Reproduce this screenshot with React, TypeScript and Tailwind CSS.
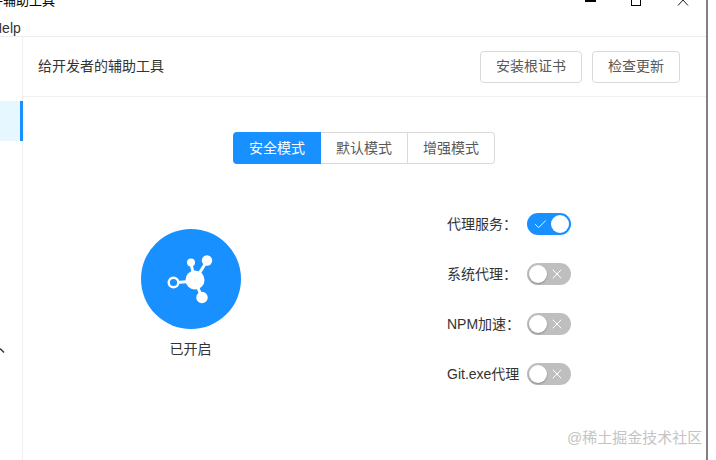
import { Check, X } from "lucide-react";

const font = "font-['Liberation_Sans','Noto_Sans_CJK_SC',sans-serif]";

function Toggle({ on }: { on?: boolean }) {
  if (on) {
    return (
      <div className="w-[44px] h-[22px] rounded-full bg-[#1890ff] flex items-center justify-between pl-[6px] pr-[2px]">
        <Check size={15} strokeWidth={1.5} className="text-white" />
        <div className="w-[18px] h-[18px] rounded-full bg-white" />
      </div>
    );
  }
  return (
    <div className="w-[44px] h-[22px] rounded-full bg-[#bfbfbf] flex items-center justify-between pl-[2px] pr-[6px]">
      <div className="w-[18px] h-[18px] rounded-full bg-white shadow-[0_1px_2px_rgba(0,0,0,0.3)]" />
      <X size={16} strokeWidth={1.5} className="text-white" />
    </div>
  );
}

const rows = [
  { label: "代理服务：", on: true },
  { label: "系统代理：" },
  { label: "NPM加速：" },
  { label: "Git.exe代理" },
];

export default function App() {
  return (
    <div className={`w-[716px] h-[460px] overflow-hidden bg-white ${font}`}>
      <div className="w-[708px] h-[460px] border-r-2 border-[#808080] flex flex-col">
        {/* Title bar, cut off by the top of the picture */}
        <div className="h-[37px] shrink-0 overflow-hidden border-b border-[#ececec]">
          <div className="flex items-start justify-between h-[18px] -mt-[8px]">
            <span className="text-[13px] leading-[18px] text-black -ml-[10px]">手辅助工具</span>
            <div className="flex items-start">
              <div className="w-[11px] h-[10px] border-b-[2px] border-black mr-[35px]" />
              <div className="w-[10px] h-[14px] border border-black mr-[36px]" />
              <svg width="12" height="14" viewBox="0 0 12 14" className="mr-[17px]">
                <path d="M1 13.5 L6 8 L11 13.5" fill="none" stroke="#222" strokeWidth="1" />
              </svg>
            </div>
          </div>
          <div className="text-[14px] leading-[18px] text-[#333] -ml-[8px] mt-[9px]">Help</div>
        </div>

        <div className="flex flex-1 min-h-0">
          {/* Sidebar */}
          <div className="w-[23px] shrink-0 border-r border-[#f0f0f0] pt-[64px] relative">
            <div className="h-[40px] bg-[#e6f7ff] border-r-[3px] border-[#1890ff] -mr-px" />
            <svg width="6" height="6" viewBox="0 0 6 6" className="absolute left-0 top-[311px]">
              <path d="M0 0.5 L4 4.5" stroke="#333" strokeWidth="1.4" fill="none" />
            </svg>
          </div>

          {/* Content */}
          <div className="flex-1 flex flex-col min-w-0">
            <div className="h-[60px] shrink-0 border-b border-[#f0f0f0] flex items-center justify-between pl-[15px] pr-[26px]">
              <span className="text-[14px] text-[#333]">给开发者的辅助工具</span>
              <div className="flex gap-[10px]">
                <div className="w-[102px] h-[32px] rounded border border-[#d9d9d9] flex items-center justify-center text-[14px] text-[#595959]">
                  安装根证书
                </div>
                <div className="w-[88px] h-[32px] rounded border border-[#d9d9d9] flex items-center justify-center text-[14px] text-[#595959]">
                  检查更新
                </div>
              </div>
            </div>

            <div className="flex justify-center pt-[35px] pr-[1px]">
              <div className="flex h-[32px] text-[14px]">
                <div className="w-[88px] rounded-l bg-[#1890ff] text-white flex items-center justify-center">安全模式</div>
                <div className="w-[87px] border-y border-r border-[#d9d9d9] text-[#595959] flex items-center justify-center">默认模式</div>
                <div className="w-[87px] border-y border-r border-[#d9d9d9] rounded-r text-[#595959] flex items-center justify-center">增强模式</div>
              </div>
            </div>

            <div className="flex pt-[49px]">
              <div className="w-[424px] shrink-0 flex flex-col items-center pt-[16px] pr-[89px]">
                <div className="w-[100px] h-[100px] rounded-full bg-[#1890ff] flex items-center justify-center">
                  <svg width="100" height="100" viewBox="0 0 100 100">
                    <g stroke="#fff" strokeWidth="3" fill="none">
                      <path d="M36 53.5 L54 52" />
                      <path d="M54 51 L50 35" />
                      <path d="M54 51 L66 32" />
                      <path d="M54 51 L61 69" />
                    </g>
                    <circle cx="54" cy="51" r="9.5" fill="#fff" />
                    <circle cx="50" cy="33.5" r="4" fill="#fff" />
                    <circle cx="66" cy="31.5" r="5.2" fill="#fff" />
                    <circle cx="61" cy="68.5" r="5.7" fill="#fff" />
                    <circle cx="32.5" cy="53.5" r="4.8" fill="#1890ff" stroke="#fff" strokeWidth="2.4" />
                  </svg>
                </div>
                <div className="mt-[11px] text-[14px] leading-[18px] text-[#333]">已开启</div>
              </div>

              <div className="flex flex-col gap-[28px]">
                {rows.map((row) => (
                  <div key={row.label} className="flex items-center h-[22px]">
                    <span className="w-[80px] text-[14px] text-[#333] whitespace-nowrap">{row.label}</span>
                    <Toggle on={row.on} />
                  </div>
                ))}
              </div>
            </div>
          </div>
        </div>
      </div>
      {/* Watermark */}
      <div className="absolute left-[567px] top-[429px] text-[15px] leading-[18px] text-[#c4c4c4]">
        @稀土掘金技术社区
      </div>
    </div>
  );
}
